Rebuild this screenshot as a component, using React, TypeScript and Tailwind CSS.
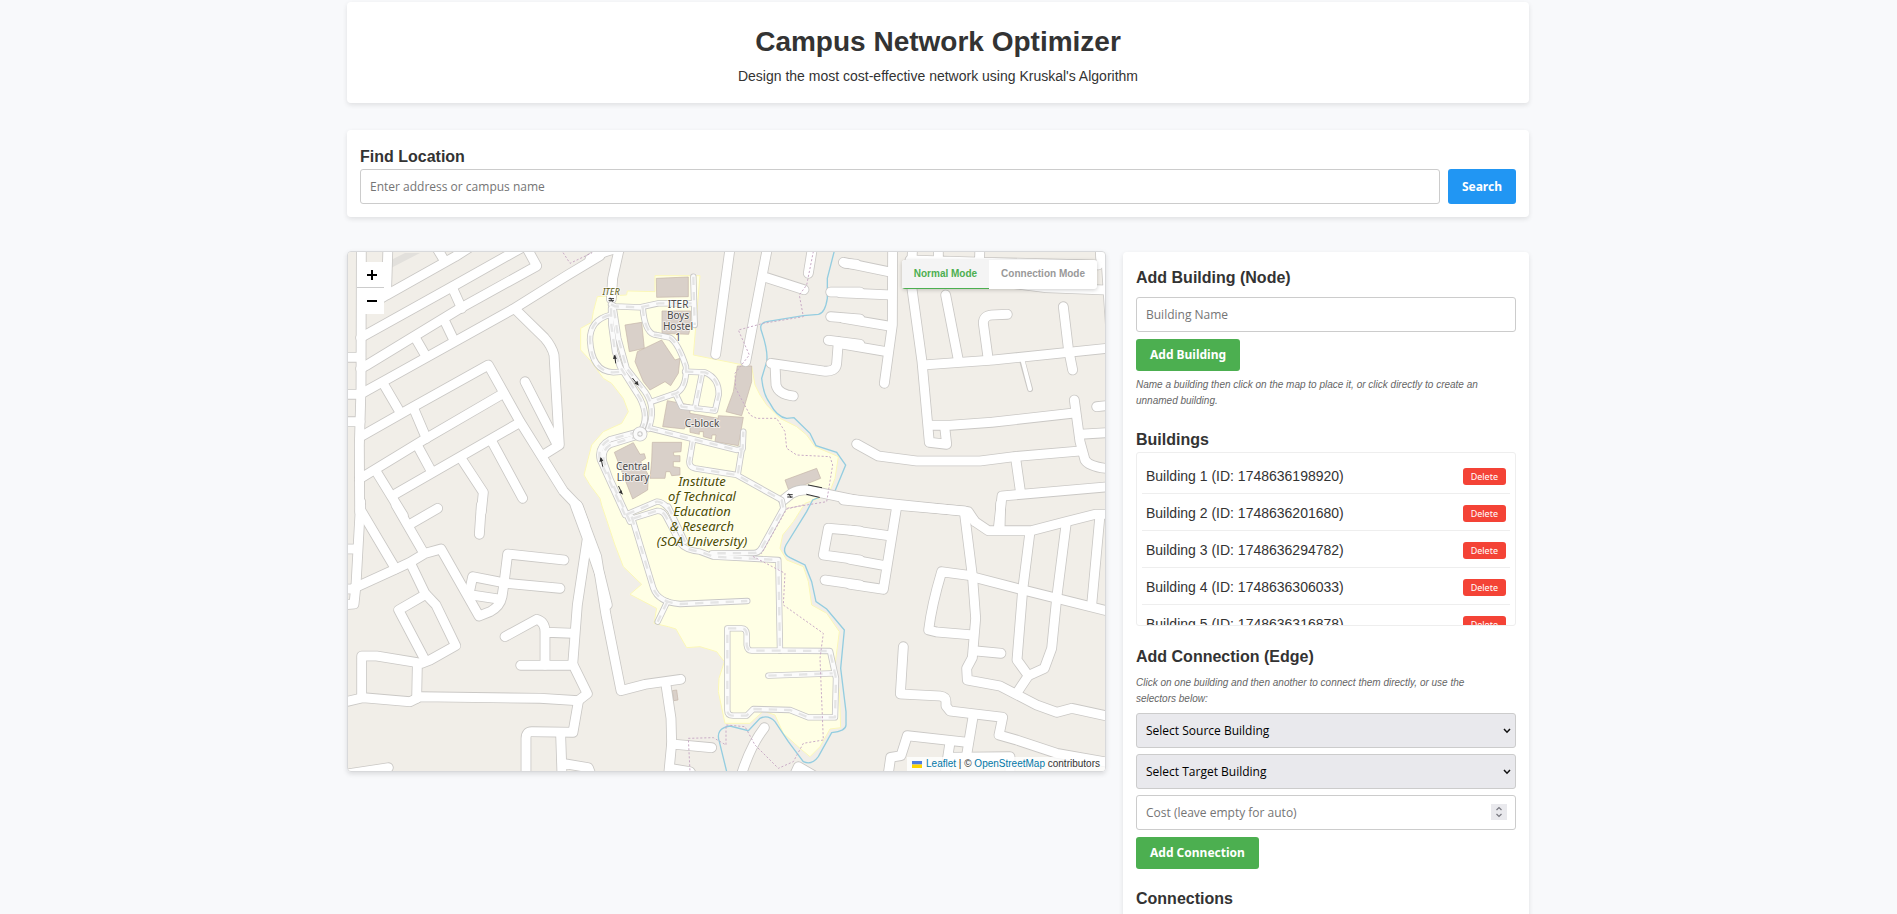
import React from "react";

type Tile = { x: number; y: number; roads: string[] };

/* Street centre lines, grouped by tile. One page pixel is three tile units. */
const TILES: Tile[] = [
  {
    x: 340,
    y: 245,
    roads: [
      "M64 0L63 430L58 600L59 800",
      "M144 0L140 130L120 160",
      "M95 177L140 150L345 35L400 0",
      "M285 0L312 45",
      "M62 278L335 126L520 22L560 0",
      "M62 371L78 362L360 190L590 63L553 -5",
      "M62 447L145 401L520 192L680 92L780 32",
      "M228 282L257 332M316 232L342 286M338 130L365 190",
      "M528 195L613 278Q636 305 642 330L658 600L610 630",
      "M555 410L652 600",
      "M131 418L178 498",
      "M62 575L210 491L445 360L540 530L612 645L670 738L715 785L735 840",
      "M58 702L250 585L482 450",
      "M223 495L259 580M234 605L272 675",
      "M168 746L535 535",
      "M112 685L190 812",
      "M365 643L430 742L424 800",
      "M457 592L548 760",
      "M10 337L62 337M10 448L62 448M10 530L60 530",
    ],
  },
  {
    x: 340,
    y: 505,
    roads: [
      "M62 -10L58 60L48 240L42 297L10 299",
      "M62 0L62 15L167 192",
      "M168 0L250 142",
      "M215 55L293 10",
      "M424 0L418 88",
      "M10 132L50 132M10 252L45 252",
      "M40 250L165 193L210 172L255 145L303 132L417 333L450 320Q480 305 486 275L492 235L503 147L672 165",
      "M388 262L398 215L500 235L660 250M395 270L475 282",
      "M213 178L255 265L288 300L347 422L270 465L245 475L110 453L65 453L65 575",
      "M257 268L176 315L255 465",
      "M232 480L230 580",
      "M10 592L70 578L210 590L240 575L600 580L715 587L742 566L700 481L542 481",
      "M705 0L742 100L712 300L698 480",
      "M742 100L780 210L802 300",
      "M495 395L590 343Q615 350 615 380L615 480M620 382L700 385",
      "M715 590L699 682L575 680Q558 680 558 700L558 840",
      "M662 690L667 840M668 775L745 788L765 840",
      "M-10 812L145 788",
    ],
  },
  {
    x: 590,
    y: 505,
    roads: [
      "M-38 0L20 155L48 330L93 557L165 538L272 523",
      "M228 540L243 640L245 715L233 840",
      "M245 717L365 728M240 790L300 800L325 840",
      "M523 668Q475 730 445 840",
      "M600 840L625 785L720 840",
      "M700 150L715 70L810 78M700 150L810 165M705 225L810 240",
    ],
  },
  {
    x: 850,
    y: 505,
    roads: [
      "M0 76L118 92M0 163L105 182M0 238L100 253L140 5",
      "M-20 -15L130 0L345 18L375 50L415 77L545 77L640 52L735 28L790 28",
      "M452 -5L450 75",
      "M343 20L368 220L377 340L367 458L350 490L352 525L450 543L560 600L620 622L665 610L790 637",
      "M365 212L275 200Q245 300 236 375L260 381L370 390",
      "M365 215L520 255L790 322",
      "M540 80L518 255L501 465L535 512L503 560",
      "M648 60L620 280L605 430L583 490L535 512",
      "M750 30L725 300",
      "M370 437L453 445",
      "M160 425L151 567L270 573Q288 575 288 590L288 603L300 618L458 637L447 690L500 705L620 745L790 775",
      "M370 630L350 750",
      "M110 840L122 757L153 752L172 692L350 712",
      "M300 712L285 810M310 757L480 755L480 820",
    ],
  },
  {
    x: 590,
    y: 245,
    roads: [
      "M0 42Q40 15 130 0",
      "M88 10L68 100L64 162",
      "M420 10L377 328",
      "M532 10L467 350",
      "M530 98L642 134",
      "M667 10L655 85",
      "M765 55L800 58M722 141L810 141M722 215L810 222M715 286L810 298",
      "M543 355L700 378Q738 382 740 355L745 290",
      "M555 360L558 420Q565 448 610 453",
      "M580 765L605 745Q625 733 650 735L700 745L810 768",
    ],
  },
  {
    x: 850,
    y: 245,
    roads: [
      "M-20 52L125 82M-30 143L125 150M-20 220L122 244M-20 298L110 320",
      "M128 0L127 240L103 415",
      "M20 597L85 633L200 648L390 648L490 635L690 618",
      "M497 640L512 745",
      "M188 0L183 110L216 350L238 592L290 598L284 545",
      "M240 541L300 541L425 532L665 505",
      "M218 360L430 345L790 308",
      "M287 150L325 345",
      "M472 208L425 210Q400 212 400 235L415 345",
      "M640 185L655 310L668 375",
      "M673 465L690 590L705 645Q720 668 790 672",
      "M740 485L790 480M690 568L790 562",
      "M265 0L265 60M180 45L400 52L745 60M390 0L388 60",
      "M400 105L590 128L790 136M750 0L752 40M768 40L785 300",
      "M0 763L140 778L355 800L375 830",
      "M790 724L456 753L445 850",
    ],
  },
];

const CAMPUS_AREA =
  "22,155 110,150 112,138 195,140 195,92 330,92 310,330 485,365 495,420 510,450 530,480 570,520 620,545 650,570 675,605 745,635 735,700 715,750 645,775 610,830 578,870 570,910 590,945 640,965 655,1010 665,1080 710,1105 748,1160 735,1260 748,1340 752,1448 720,1452 690,1505 660,1535 630,1510 580,1465 555,1410 520,1398 480,1435 405,1435 385,1340 387,1300 403,1250 380,1220 330,1205 290,1208 258,1152 235,1145 192,1135 200,1090 120,1048 155,1018 100,965 75,900 35,780 30,760 0,720 -18,690 5,600 40,560 95,535 115,500 100,460 65,415 40,400 0,345 -28,315 -28,250 5,232 10,200";

const CAMPUS_ROADS = [
  "M63 178L75 184L150 187L205 175L305 175",
  "M310 95L314 240",
  "M158 187Q165 270 200 270L240 278Q265 295 288 365Q290 430 258 445L185 470",
  "M63 190L64 240L75 320L90 365L150 460Q180 520 150 560",
  "M72 195L85 280L110 370L165 440Q200 490 175 552",
  "M60 210Q0 225 0 285Q5 380 70 382L100 380",
  "M285 380L345 382Q388 400 386 450L375 497L275 485L258 450",
  "M335 390L315 490",
  "M180 550L440 615L458 612L460 560M455 615L443 690",
  "M308 590L298 650Q298 666 315 670L440 690L575 765L580 790L515 908Q505 925 490 924L365 925",
  "M150 572L60 600Q35 615 42 650L60 700L120 830",
  "M145 560L60 583Q20 605 30 645L105 810",
  "M110 808L200 770Q215 768 235 790",
  "M125 815L190 1030Q205 1072 270 1077L472 1068",
  "M232 1070L203 1130",
  "M130 820L200 798Q218 796 228 815L270 895Q285 915 330 920L370 935L565 945L570 1217",
  "M235 785L285 890",
  "M570 1217L485 1217Q472 1217 470 1200L470 1165Q468 1150 455 1150L412 1150L412 1395Q412 1412 430 1412L470 1412L490 1392L600 1395L655 1417L735 1417L738 1300L720 1218L570 1217",
  "M535 1292L728 1285",
];

const BUILDINGS = [
  "199,100 295,96 295,155 200,157",
  "216,198 302,198 302,244 296,268 216,265",
  "105,240 155,232 163,310 118,320",
  "135,350 142,320 215,285 255,345 270,340 265,385 242,422 225,410 180,435 160,410",
  "442,363 485,363 485,410 455,512 408,500 430,440",
  "232,467 300,480 300,505 385,520 385,512 460,517 445,602 375,590 378,570 366,570 365,582 340,575 340,560 328,560 328,568 300,562 300,548 285,545 283,552 218,545",
  "73,622 130,593 150,628 163,626 167,640 152,650 175,690 173,735 128,762",
  "187,592 275,592 273,620 250,622 252,632 270,632 270,650 250,650 250,665 270,668 270,690 245,692 240,680 228,680 225,700 180,700 185,648",
  "585,705 680,670 692,700 597,738",
  "247,1337 260,1335 264,1365 251,1367",
];

const WATER =
  "M735 10L712 100L712 160Q705 205 685 208L640 212L530 230Q505 235 515 260Q535 320 530 350L515 400Q520 450 540 475Q560 515 590 520L612 518L660 565L678 602L740 622L767 660L735 738L668 765L650 800L588 900Q575 925 600 938L645 960L665 1010L678 1070L710 1092L763 1155L752 1270L768 1400L768 1440Q768 1458 725 1463L685 1535Q665 1562 640 1550L595 1490L555 1430Q535 1408 510 1420L475 1457L420 1443Q375 1450 388 1490L415 1600";

const PATHS = [
  "M670 20L650 120L628 150L640 215L520 235L445 255L478 330L435 385L437 430L480 510L500 520L560 520L585 560L590 610L620 630L720 635L728 660L710 770L590 790",
  "M640 780L590 792L515 925",
  "M490 935L585 985L580 1080L700 1165L690 1240L700 1485L640 1495L610 1550L565 1570L495 1500L465 1445L408 1440L408 1500L370 1478L295 1480L300 1580",
  "M-80 24L-60 55L5 24",
];

const HALO = "[paint-order:stroke] [stroke:#ffffff] [stroke-opacity:0.6] [stroke-width:2px] [stroke-linejoin:round]";

function Label({ x, y, lines, step, className }: { x: number; y: number; lines: string[]; step: number; className: string }) {
  return (
    <text x={x} y={y} textAnchor="middle" className={`font-['Noto_Sans',sans-serif] ${HALO} ${className}`}>
      {lines.map((line, i) => (
        <tspan key={line} x={x} dy={i === 0 ? 0 : step}>
          {line}
        </tspan>
      ))}
    </text>
  );
}

function Streets({ color, width }: { color: string; width: number }) {
  return (
    <g fill="none" stroke={color} strokeWidth={width} strokeLinecap="round" strokeLinejoin="round">
      {TILES.map((t) => (
        <g key={`${t.x}-${t.y}`} transform={`translate(${t.x} ${t.y}) scale(0.33333)`}>
          {t.roads.map((d) => (
            <path key={d} d={d} />
          ))}
        </g>
      ))}
    </g>
  );
}

function CampusMap() {
  return (
    <svg viewBox="348 252 757 519" preserveAspectRatio="xMidYMid slice" className="block h-[519px] w-full" role="img" aria-label="Campus map">
      <rect x="0" y="0" width="2400" height="1400" fill="#f1eee8" />
      <g transform="translate(590 245) scale(0.33333)">
        <polygon points={CAMPUS_AREA} fill="#ffffe5" stroke="#fcf8b8" strokeWidth="3" />
        <path d={WATER} fill="none" stroke="#94cde0" strokeWidth="4" />
        {BUILDINGS.map((p) => (
          <polygon key={p} points={p} fill="#d9d0c9" stroke="#c4b4a8" strokeWidth="2" />
        ))}
      </g>
      <path d="M391 268V260L405 253H420Z" fill="#e2e0dc" />
      <Streets color="#cac8c5" width={32} />
      <path d="M1022 360L1030 389" stroke="#cac8c5" strokeWidth="6" strokeLinecap="round" />
      <Streets color="#ffffff" width={27} />
      <path d="M1022 358L1030 389" stroke="#ffffff" strokeWidth="4" strokeLinecap="round" />
      <g transform="translate(590 245) scale(0.33333)" fill="none" strokeLinecap="round" strokeLinejoin="round">
        <g stroke="#c8c7c6" strokeWidth="19">
          {CAMPUS_ROADS.map((d) => (
            <path key={d} d={d} />
          ))}
        </g>
        <g stroke="#fbfbfb" strokeWidth="14">
          {CAMPUS_ROADS.map((d) => (
            <path key={d} d={d} />
          ))}
        </g>
        <g stroke="#e5e5e5" strokeWidth="7" strokeLinecap="butt" strokeDasharray="25 21">
          {CAMPUS_ROADS.map((d) => (
            <path key={d} d={d} />
          ))}
        </g>
        <circle cx="150" cy="567" r="14" stroke="#c8c7c6" strokeWidth="17" />
        <circle cx="150" cy="567" r="14" stroke="#fbfbfb" strokeWidth="12" />
        <g stroke="#c9abc6" strokeWidth="3" strokeDasharray="4 8">
          {PATHS.map((d) => (
            <path key={d} d={d} />
          ))}
        </g>
        <g stroke="#333333" strokeWidth="3">
          <path d="M655 720L695 728M650 748L688 757" />
          <path d="M77 354L75 332M144 420L128 400M38 664L33 640M97 747L86 724" />
          <path d="M57 161H71M57 167H71M61 159L67 169M593 749H607M593 756H607M597 747L603 758" />
        </g>
        <g fill="#333333">
          <path d="M69 342L73 329L81 341ZM146 421L133 416L142 407ZM28 651L32 636L40 647ZM97 748L86 742L95 736Z" />
        </g>
      </g>
      <Label x={611} y={295} step={11} lines={["ITER"]} className="fill-[#5c5c14] text-[9px] italic" />
      <Label x={678} y={308} step={11} lines={["ITER", "Boys", "Hostel", "1"]} className="fill-[#4a4a4a] text-[10px]" />
      <Label x={702} y={427} step={11} lines={["C-block"]} className="fill-[#4a4a4a] text-[10px]" />
      <Label x={633} y={470} step={11} lines={["Central", "Library"]} className="fill-[#4a4a4a] text-[10px]" />
      <Label
        x={702}
        y={486}
        step={15}
        lines={["Institute", "of Technical", "Education", "& Research", "(SOA University)"]}
        className="fill-[#4d4d00] text-[13px] italic"
      />
    </svg>
  );
}

const FIELD =
  "block h-[35px] w-full rounded-[3px] border border-[#cccccc] px-[9px] font-['Open_Sans','Noto_Sans',sans-serif] text-[12px] placeholder:text-[#757575]";
const BUTTON_FONT = "font-['Noto_Sans',sans-serif]";
const HEADING = "text-[16px] leading-[24px] font-bold text-[#333333]";
const NOTE = "pr-4 text-[10px] leading-4 italic text-[#666666]";
const GREEN = `h-8 rounded-[3px] bg-[#4caf50] px-[14px] text-[12px] font-bold text-white ${BUTTON_FONT}`;
const CARD = "rounded-[4px] bg-white shadow-[0_2px_5px_rgba(0,0,0,0.1)]";

function BuildingSelect({ label }: { label: string }) {
  return (
    <div className="relative">
      <select aria-label={label} className={`${FIELD} appearance-none bg-[#e9e9ed] text-black`}>
        <option>{label}</option>
      </select>
      <svg viewBox="0 0 8 6" className="pointer-events-none absolute top-[15px] right-[5px] h-[6px] w-2" aria-hidden="true">
        <path d="M1 1L4 4.2L7 1" fill="none" stroke="#111111" strokeWidth="1.5" />
      </svg>
    </div>
  );
}

const BUILDING_LIST = [
  { name: "Building 1", id: "1748636198920" },
  { name: "Building 2", id: "1748636201680" },
  { name: "Building 3", id: "1748636294782" },
  { name: "Building 4", id: "1748636306033" },
  { name: "Building 5", id: "1748636316878" },
];

export default function App() {
  return (
    <div className="h-screen overflow-y-auto bg-[#f8f9fb] pt-[2px] pr-[21px] font-['Liberation_Sans',Arial,sans-serif] text-[#333333] [scrollbar-width:none]">
      <div className="mx-auto max-w-[1182px]">
        <header className={`${CARD} pt-[19px] pb-[15px] text-center`}>
          <h1 className="text-[28px] leading-[42px] font-bold">Campus Network Optimizer</h1>
          <p className="mt-px text-[14px] leading-6">Design the most cost-effective network using Kruskal's Algorithm</p>
        </header>

        <section className={`${CARD} mt-[27px] px-[13px] pt-[15px] pb-[13px]`}>
          <h2 className={HEADING}>Find Location</h2>
          <div className="flex gap-2">
            <input type="text" aria-label="Address or campus name" placeholder="Enter address or campus name" className={`${FIELD} min-w-0 flex-1`} />
            <button type="button" className={`rounded-[3px] bg-[#2196f3] px-[14px] text-[12px] font-bold text-white ${BUTTON_FONT}`}>
              Search
            </button>
          </div>
        </section>

        <main className="mt-[34px] grid grid-cols-[minmax(0,1fr)_406px] items-start gap-[17px]">
          <div className="relative overflow-hidden rounded-[4px] border border-[#d8d9db] shadow-[0_2px_5px_rgba(0,0,0,0.12)]">
            <CampusMap />
            <div className="absolute top-[10px] left-[9px] w-[27px] bg-white text-black">
              <button type="button" aria-label="Zoom in" className="flex h-[26px] w-full items-center justify-center border-b border-[#cccccc]">
                <svg viewBox="0 0 12 12" className="ml-[2px] size-3" aria-hidden="true">
                  <path d="M1 6H11M6 1V11" stroke="#000000" strokeWidth="2" />
                </svg>
              </button>
              <button type="button" aria-label="Zoom out" className="flex h-[26px] w-full items-center justify-center">
                <svg viewBox="0 0 12 12" className="ml-[2px] size-3" aria-hidden="true">
                  <path d="M1 6H11" stroke="#000000" strokeWidth="2" />
                </svg>
              </button>
            </div>
            <div className="absolute top-2 right-2 flex h-[29px] overflow-hidden rounded-[3px] bg-white text-[10px] font-bold shadow-[0_1px_4px_rgba(0,0,0,0.2)]">
              <button type="button" className="border-b border-[#4caf50] bg-[#f4f4f4] px-3 pb-px text-[#4caf50]">
                Normal Mode
              </button>
              <button type="button" className="px-3 pb-[2px] text-[#999999]">
                Connection Mode
              </button>
            </div>
            <div className="absolute right-0 bottom-0 flex items-center gap-1 bg-white/80 px-[5px] text-[10px] leading-[14px]">
              <svg viewBox="0 0 10 7" className="h-[7px] w-[10px]" aria-hidden="true">
                <path d="M0 0H10V3.5H0Z" fill="#4c7be1" />
                <path d="M0 3.5H10V7H0Z" fill="#ffd500" />
              </svg>
              <span>
                <a href="#leaflet" className="text-[#0078a8]">Leaflet</a> | ©{" "}
                <a href="#osm" className="text-[#0078a8]">OpenStreetMap</a> contributors
              </span>
            </div>
          </div>

          <aside className={`${CARD} mt-px px-[13px] pt-[14px] pb-10`}>
            <h2 className={HEADING}>Add Building (Node)</h2>
            <div className="mt-[7px]">
              <input type="text" aria-label="Building Name" placeholder="Building Name" className={FIELD} />
            </div>
            <button type="button" className={`mt-[7px] block ${GREEN}`}>Add Building</button>
            <p className={`mt-[6px] ${NOTE}`}>
              Name a building then click on the map to place it, or click directly to create an unnamed building.
            </p>

            <h2 className={`mt-[19px] ${HEADING}`}>Buildings</h2>
            <ul className="h-[174px] overflow-y-auto rounded-[3px] border border-[#eeeeee] px-[5px] py-1 [scrollbar-width:none]">
              {BUILDING_LIST.map((b) => (
                <li key={b.id} className="flex h-[37px] items-center justify-between border-b border-[#eeeeee] pt-[2px] pr-1 pl-1 text-[14px]">
                  <span>
                    {b.name} (ID: {b.id})
                  </span>
                  <button type="button" className={`h-[17px] rounded-[3px] bg-[#f44336] px-2 text-[9px] leading-[17px] text-white ${BUTTON_FONT}`}>
                    Delete
                  </button>
                </li>
              ))}
            </ul>

            <h2 className={`mt-[19px] ${HEADING}`}>Add Connection (Edge)</h2>
            <p className={`mt-[6px] ${NOTE}`}>
              Click on one building and then another to connect them directly, or use the selectors below:
            </p>
            <div className="mt-[6px] grid gap-[6px]">
              <BuildingSelect label="Select Source Building" />
              <BuildingSelect label="Select Target Building" />
              <div className="relative">
                <input
                  type="number"
                  aria-label="Cost"
                  placeholder="Cost (leave empty for auto)"
                  className={`${FIELD} [appearance:textfield]`}
                />
                <span className="pointer-events-none absolute top-[9px] right-[9px] flex size-4 items-center justify-center bg-[#e9e9ed]" aria-hidden="true">
                  <svg viewBox="0 0 8 12" className="h-3 w-2">
                    <path d="M1.5 4L4 1.5L6.5 4M1.5 8L4 10.5L6.5 8" fill="none" stroke="#77777f" strokeWidth="1.2" />
                  </svg>
                </span>
              </div>
            </div>
            <button type="button" className={`mt-[7px] block ${GREEN}`}>Add Connection</button>

            <h2 className={`mt-[18px] ${HEADING}`}>Connections</h2>
          </aside>
        </main>
      </div>
    </div>
  );
}
